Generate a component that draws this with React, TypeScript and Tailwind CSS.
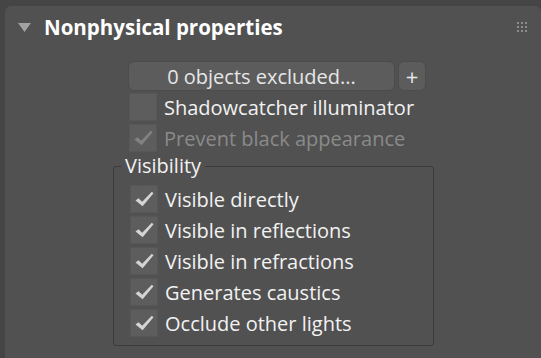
import React from "react";

const font = { fontFamily: '"Open Sans", "Noto Sans", sans-serif' };

function Check({ checked, disabled }: { checked?: boolean; disabled?: boolean }) {
  return (
    <div className="w-[28px] h-[28px] bg-[#5d5d5d] border border-[#575757] flex items-center justify-center shrink-0">
      {checked && (
        <svg width="19" height="16" viewBox="0 0 19 16" className="mt-[1px]">
          <path
            d="M0.5 9.5 L3.5 7.2 L7.2 10.8 L16.8 0.8 L18.5 2.2 L7.6 15.2 Z"
            fill={disabled ? "#828282" : "#d4d4d4"}
          />
        </svg>
      )}
    </div>
  );
}

function Row({ label, checked, disabled }: { label: string; checked?: boolean; disabled?: boolean }) {
  return (
    <div className="h-[31px] flex items-center gap-[7px]">
      <Check checked={checked} disabled={disabled} />
      <span className={`mt-[2px] text-[20px] leading-none ${disabled ? "text-[#8a8a8a]" : "text-[#f2f2f2]"}`}>{label}</span>
    </div>
  );
}

export default function App() {
  return (
    <div className="w-[541px] h-[358px] bg-[#454545] pt-[6px] pl-[5px] overflow-hidden" style={font}>
      <div className="h-full bg-[#515151] rounded-t-[6px] flex flex-col">
        <div className="h-[42px] flex items-center pl-[13px] pr-[14px]">
          <svg width="13" height="10" viewBox="0 0 13 10" className="mt-[1px]">
            <path d="M0 0 L13 0 L6.5 9 Z" fill="#a3a3a3" />
          </svg>
          <span className="ml-[13px] mt-[1px] text-[20.5px] font-bold text-white leading-none">Nonphysical properties</span>
          <div className="ml-auto grid grid-cols-3 gap-[2px]">
            {Array.from({ length: 9 }).map((_, i) => (
              <div key={i} className="w-[2px] h-[2px] bg-[#8c8c8c]" />
            ))}
          </div>
        </div>
        <div className="pl-[123px] pt-[13px] flex flex-col">
          <div className="flex gap-[3px] h-[30px]">
            <div className="w-[267px] h-full rounded-[6px] bg-[#5c5c5c] border border-[#4c4c4c] flex items-center justify-center text-[20px] text-[#e6e6e6]">
              <span className="mt-[1px]">0 objects excluded...</span>
            </div>
            <div className="w-[28px] h-full rounded-[6px] bg-[#5c5c5c] border border-[#4c4c4c] flex items-center justify-center text-[22px] text-[#e6e6e6]">
              +
            </div>
          </div>
          <div className="pl-[1px]">
            <Row label="Shadowcatcher illuminator" />
            <Row label="Prevent black appearance" checked disabled />
          </div>
          <fieldset className="ml-[-15px] w-[321px] border border-[#3a3a3a] rounded-[3px] mt-[1px] pb-[7px]">
            <legend className="ml-[7px] px-[4px] text-[20px] text-[#f2f2f2] leading-[24px]">Visibility</legend>
            <div className="mt-[5px] pl-[16px]">
              <Row label="Visible directly" checked />
              <Row label="Visible in reflections" checked />
              <Row label="Visible in refractions" checked />
              <Row label="Generates caustics" checked />
              <Row label="Occlude other lights" checked />
            </div>
          </fieldset>
        </div>
      </div>
    </div>
  );
}
